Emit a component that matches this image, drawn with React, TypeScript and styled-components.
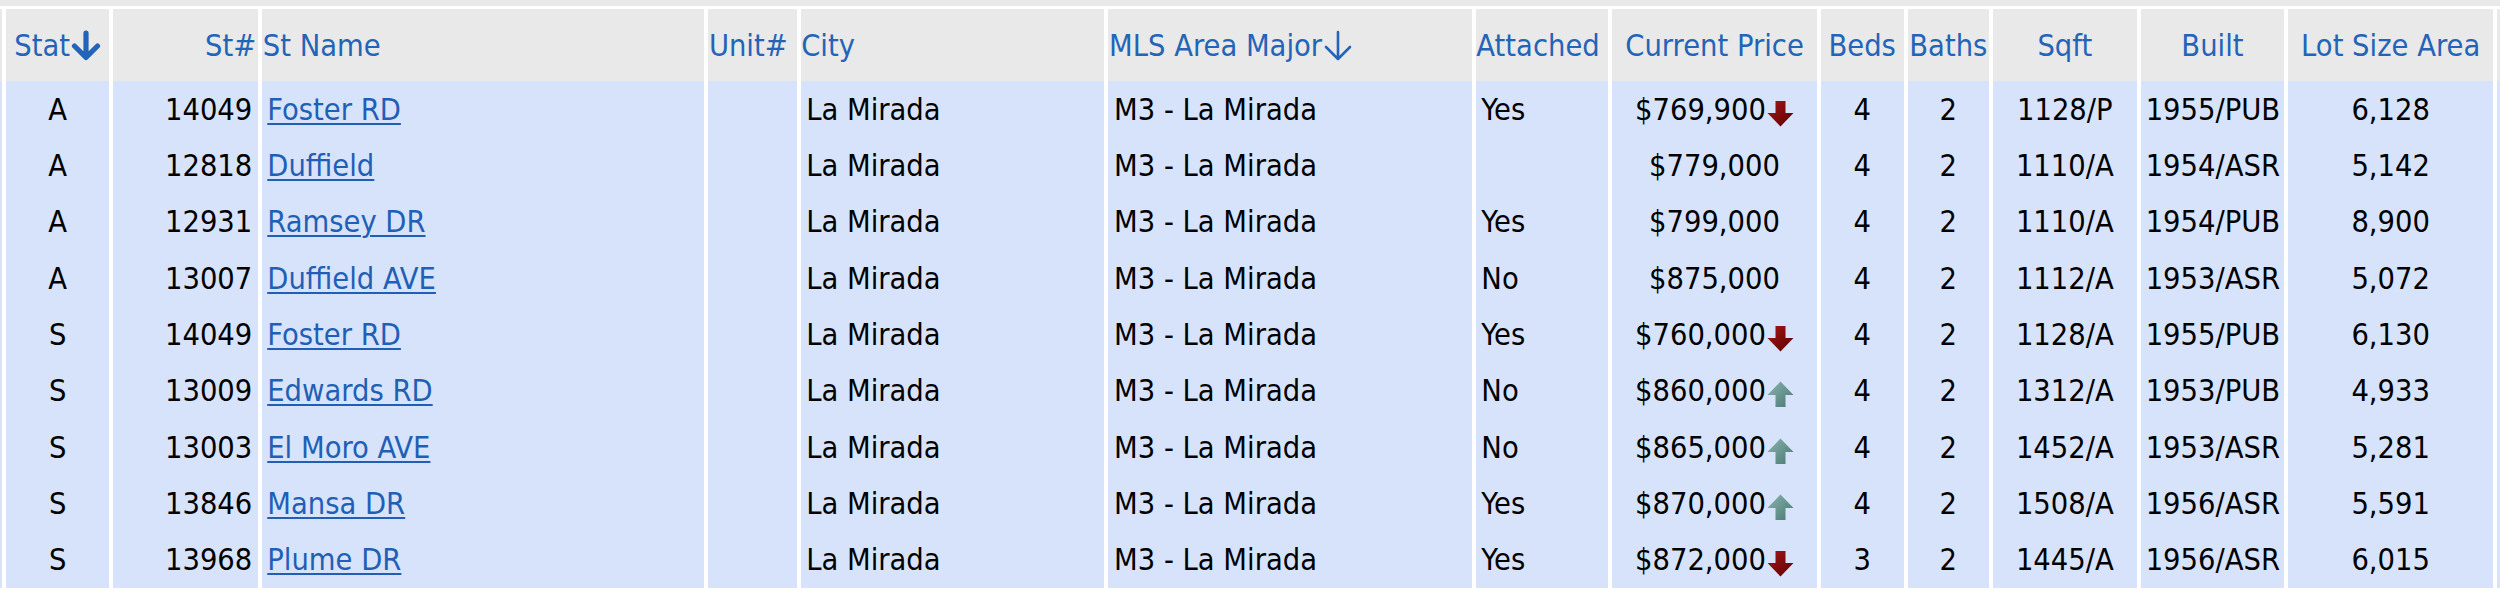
import React from "react";
import styled, { createGlobalStyle } from "styled-components";

const GlobalStyle = createGlobalStyle`
    body {
        margin: 0;
        background: #ffffff;
        font-family: "DejaVu Sans Condensed", "DejaVu Sans", "Liberation Sans", sans-serif;
        font-stretch: condensed;
    }
`

type Align = "left" | "center" | "right"

const Page = styled.div`
    width: 2500px;
    overflow: hidden;
`

const TopStrip = styled.div`
    height: 6px;
    background: #e9e9e9;
    margin-bottom: 3.3px;
`

const Table = styled.table`
    width: 2500px;
    table-layout: fixed;
    border-collapse: separate;
    border-spacing: 0;
    font-size: 30.5px;
`

const HeadCell = styled.th<{ $align: Align; $pad?: string }>`
    height: 71.7px;
    padding: ${p => p.$pad ?? "0 1px"};
    background: #e9e9e9;
    border-left: 4.31px solid #ffffff;
    text-align: ${p => p.$align};
    vertical-align: middle;
    font-weight: normal;
    color: #2364b8;
    white-space: nowrap;
    overflow: hidden;
    &:first-child { border-left: none; }
`

const Cell = styled.td<{ $align: Align; $pad?: string }>`
    height: 56.33px;
    padding: ${p => p.$pad ?? "0 5px"};
    background: #d6e3fb;
    border-left: 4.31px solid #ffffff;
    text-align: ${p => p.$align};
    vertical-align: middle;
    color: #000000;
    white-space: nowrap;
    overflow: hidden;
    &:first-child { border-left: none; }
`

const StreetLink = styled.a`
    color: #1f5fb5;
    text-decoration: underline;
    text-decoration-thickness: 2px;
    text-underline-offset: 3px;
    cursor: pointer;
`

const SortIcon = styled.svg`
    display: inline-block;
    vertical-align: -5px;
    margin-left: 1px;
`

const TrendIcon = styled.svg`
    display: inline-block;
    vertical-align: -7px;
    margin-left: 1px;
`

function SortArrow({ bold }: { bold?: boolean }) {
    return (
        <SortIcon width="30" height="31" viewBox="0 0 30 31">
            <path
                d={bold ? "M15 3 V27 M3.5 16 L15 27.5 L26.5 16" : "M15 2 V28 M3 17 L15 29 L27 17"}
                fill="none"
                stroke="#2364b8"
                strokeWidth={bold ? 5.2 : 2.6}
                strokeLinecap="round"
                strokeLinejoin="round"
            />
        </SortIcon>
    )
}

function Trend({ dir }: { dir: "up" | "down" }) {
    const down = dir === "down"
    const id = down ? "gDown" : "gUp"
    return (
        <TrendIcon width="27" height="27" viewBox="0 0 27 27">
            <defs>
                <linearGradient id={id} x1="0" y1="0" x2="1" y2="1">
                    <stop offset="0" stopColor={down ? "#a51717" : "#8ab4af"} />
                    <stop offset="1" stopColor={down ? "#5c0000" : "#497772"} />
                </linearGradient>
            </defs>
            {down ? (
                <path d="M8.5 1 H18.5 V13 H26.5 L13.5 26.5 L0.5 13 H8.5 Z" fill={`url(#${id})`} />
            ) : (
                <path d="M13.5 0.5 L26.5 14 H18.5 V26 H8.5 V14 H0.5 Z" fill={`url(#${id})`} />
            )}
        </TrendIcon>
    )
}

type Column = {
    key: string
    label: string
    width: number
    head: Align
    body: Align
    headPad?: string
    bodyPad?: string
    sort?: "bold" | "thin"
}

const columns: Column[] = [
    { key: "stat", label: "Stat", width: 106.6, head: "center", body: "center", headPad: "0", sort: "bold" },
    { key: "num", label: "St#", width: 149.3, head: "right", body: "right", headPad: "0 2px 0 0", bodyPad: "0 6px 0 0" },
    { key: "name", label: "St Name", width: 445.6, head: "left", body: "left", headPad: "0 0 0 0.5px" },
    { key: "unit", label: "Unit#", width: 93.3, head: "left", body: "left" },
    { key: "city", label: "City", width: 306.9, head: "left", body: "left", headPad: "0" },
    { key: "area", label: "MLS Area Major", width: 368.3, head: "left", body: "left", sort: "thin", bodyPad: "0 6px" },
    { key: "attached", label: "Attached", width: 136, head: "left", body: "left", headPad: "0" },
    { key: "price", label: "Current Price", width: 208.3, head: "center", body: "center", headPad: "0" },
    { key: "beds", label: "Beds", width: 87, head: "center", body: "center", headPad: "0" },
    { key: "baths", label: "Baths", width: 85.3, head: "center", body: "center", headPad: "0" },
    { key: "sqft", label: "Sqft", width: 147.7, head: "center", body: "center" },
    { key: "built", label: "Built", width: 147.6, head: "center", body: "center", headPad: "0" },
    { key: "lot", label: "Lot Size Area", width: 208.9, head: "center", body: "center", headPad: "0" },
]

type Listing = {
    stat: string
    num: string
    name: string
    attached: string
    price: string
    trend?: "up" | "down"
    beds: string
    baths: string
    sqft: string
    built: string
    lot: string
}

const listings: Listing[] = [
    { stat: "A", num: "14049", name: "Foster RD", attached: "Yes", price: "$769,900", trend: "down", beds: "4", baths: "2", sqft: "1128/P", built: "1955/PUB", lot: "6,128" },
    { stat: "A", num: "12818", name: "Duffield", attached: "", price: "$779,000", beds: "4", baths: "2", sqft: "1110/A", built: "1954/ASR", lot: "5,142" },
    { stat: "A", num: "12931", name: "Ramsey DR", attached: "Yes", price: "$799,000", beds: "4", baths: "2", sqft: "1110/A", built: "1954/PUB", lot: "8,900" },
    { stat: "A", num: "13007", name: "Duffield AVE", attached: "No", price: "$875,000", beds: "4", baths: "2", sqft: "1112/A", built: "1953/ASR", lot: "5,072" },
    { stat: "S", num: "14049", name: "Foster RD", attached: "Yes", price: "$760,000", trend: "down", beds: "4", baths: "2", sqft: "1128/A", built: "1955/PUB", lot: "6,130" },
    { stat: "S", num: "13009", name: "Edwards RD", attached: "No", price: "$860,000", trend: "up", beds: "4", baths: "2", sqft: "1312/A", built: "1953/PUB", lot: "4,933" },
    { stat: "S", num: "13003", name: "El Moro AVE", attached: "No", price: "$865,000", trend: "up", beds: "4", baths: "2", sqft: "1452/A", built: "1953/ASR", lot: "5,281" },
    { stat: "S", num: "13846", name: "Mansa DR", attached: "Yes", price: "$870,000", trend: "up", beds: "4", baths: "2", sqft: "1508/A", built: "1956/ASR", lot: "5,591" },
    { stat: "S", num: "13968", name: "Plume DR", attached: "Yes", price: "$872,000", trend: "down", beds: "3", baths: "2", sqft: "1445/A", built: "1956/ASR", lot: "6,015" },
]

function renderValue(col: Column, row: Listing) {
    switch (col.key) {
        case "name":
            return <StreetLink>{row.name}</StreetLink>
        case "unit":
            return ""
        case "city":
            return "La Mirada"
        case "area":
            return "M3 - La Mirada"
        case "price":
            return (
                <>
                    {row.price}
                    {row.trend && <Trend dir={row.trend} />}
                </>
            )
        default:
            return (row as any)[col.key]
    }
}

export default function App() {
    return (
        <Page>
            <GlobalStyle />
            <TopStrip />
            <Table>
                <colgroup>
                    <col style={{ width: 2.4 }} />
                    {columns.map(c => (
                        <col key={c.key} style={{ width: c.width }} />
                    ))}
                    <col />
                </colgroup>
                <thead>
                    <tr>
                        <HeadCell $align="left" $pad="0" />
                        {columns.map(c => (
                            <HeadCell key={c.key} $align={c.head} $pad={c.headPad}>
                                {c.label}
                                {c.sort && <SortArrow bold={c.sort === "bold"} />}
                            </HeadCell>
                        ))}
                        <HeadCell $align="left" $pad="0" />
                    </tr>
                </thead>
                <tbody>
                    {listings.map((row, i) => (
                        <tr key={i}>
                            <Cell $align="left" $pad="0" />
                            {columns.map(c => (
                                <Cell key={c.key} $align={c.body} $pad={c.bodyPad}>
                                    {renderValue(c, row)}
                                </Cell>
                            ))}
                            <Cell $align="left" $pad="0" />
                        </tr>
                    ))}
                </tbody>
            </Table>
        </Page>
    )
}
